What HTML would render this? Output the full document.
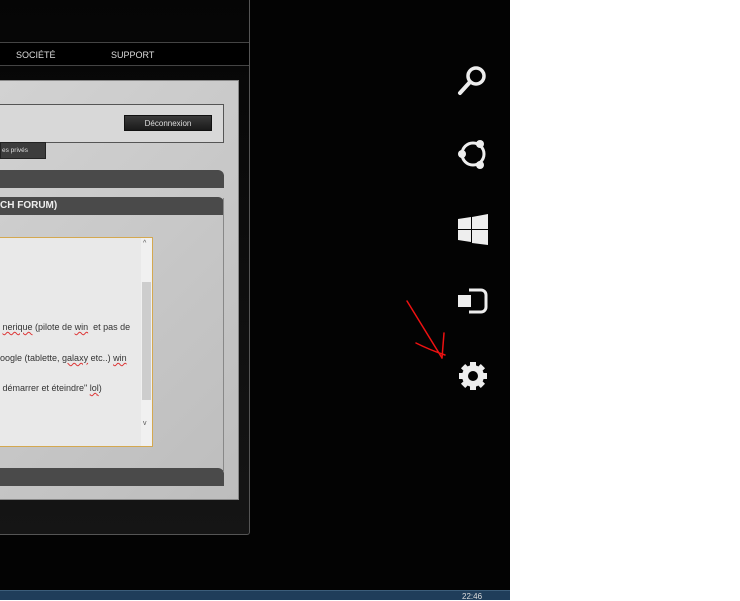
<!DOCTYPE html>
<html><head><meta charset="utf-8"><style>
*{margin:0;padding:0;box-sizing:border-box}
body{width:740px;height:600px;background:#fff;position:relative;overflow:hidden;font-family:"Liberation Sans",sans-serif}
#scr{position:absolute;left:0;top:0;width:510px;height:590px;background:#030303}
#win{position:absolute;left:0;top:0;width:250px;height:535px;background:linear-gradient(#050505,#111 70%,#151515);border-right:1px solid #555;border-bottom:1px solid #555;border-bottom-right-radius:3px}
#nav{position:absolute;left:0;top:42px;width:249px;height:24px;background:#000;border-top:1px solid #444;border-bottom:1px solid #444;color:#ddd;font-size:9px}
#nav span{position:absolute;top:7px}
#panel{position:absolute;left:0;top:80px;width:239px;height:420px;background:linear-gradient(135deg,#d2d2d2,#bdbdbd);border:1px solid #888;border-left:none}
.box{position:absolute;left:0;top:23px;width:224px;height:39px;background:#d8d8d8;border:1px solid #555;border-left:none}
.btn{position:absolute;left:124px;top:34px;width:88px;height:16px;background:linear-gradient(#3a3a3a,#1a1a1a);border:1px solid #111;color:#ddd;font-size:8px;text-align:center;line-height:15px}
.tab{position:absolute;left:0;top:61px;width:46px;height:17px;background:#3c3c3c;border:1px solid #222;color:#ddd;font-size:6.5px;line-height:15px;padding-left:1px}
.bar{position:absolute;left:0;width:224px;height:18px;background:#4a4a4a;border-top-right-radius:6px}
.frame{position:absolute;left:0;top:117px;width:224px;height:273px;border:1px solid #888;border-left:none;border-top:none}
#ta{position:absolute;left:0;top:156px;width:153px;height:210px;background:#e9e9e9;border:1px solid #d4a850;border-left:none;font-size:9px;color:#333}
#ta p{position:absolute;left:0;white-space:nowrap}
#sb{position:absolute;right:0;top:0;width:11px;height:208px;background:#f0f0f0}
#sb div{position:absolute;left:1px;top:44px;width:9px;height:118px;background:#cdcdcd}
u{text-decoration:underline wavy #d33;text-decoration-thickness:1px}
#task{position:absolute;left:0;top:590px;width:510px;height:10px;background:#1f3d5a;border-top:1px solid #3b5d7a}
#task span{position:absolute;left:462px;top:1px;font-size:8px;color:#ddd}
svg.i{position:absolute}
</style></head><body>
<div id="scr">
<div id="win">
<div id="nav"><span style="left:16px">SOCIÉTÉ</span><span style="left:111px">SUPPORT</span></div>
<div id="panel">
<div class="box"></div>
<div class="btn">Déconnexion</div>
<div class="tab">es privés</div>
<div class="bar" style="top:89px"></div>
<div class="bar" style="top:116px;color:#eee;font-size:10px;font-weight:bold;line-height:18px">CH FORUM)</div>
<div class="frame"></div>
<div id="ta">
<p style="top:84px">&nbsp;<u>nerique</u> (pilote de <u>win</u>&nbsp; et pas de</p>
<p style="top:115px">oogle (tablette, <u>galaxy</u> etc..) <u>win</u></p>
<p style="top:145px">&nbsp;démarrer et éteindre" <u>lol</u>)</p>
<div id="sb"><div></div><span style="position:absolute;left:2px;top:2px;font-size:7px;color:#555">^</span><span style="position:absolute;left:2px;top:182px;font-size:7px;color:#555">v</span></div>
</div>
<div class="bar" style="top:387px"></div>
</div>
</div>
<svg class="i" style="left:455px;top:62px" width="36" height="36" viewBox="0 0 36 36" fill="none" stroke="#eee" stroke-width="3.5"><circle cx="21" cy="14" r="8"/><line x1="15" y1="20" x2="5" y2="31" stroke-linecap="round" stroke-width="4"/></svg>
<svg class="i" style="left:455px;top:136px" width="36" height="36" viewBox="0 0 36 36" fill="none" stroke="#eee" stroke-width="3"><circle cx="18" cy="18" r="11"/><circle cx="25" cy="8" r="4" fill="#eee" stroke="none"/><circle cx="7" cy="18" r="4" fill="#eee" stroke="none"/><circle cx="25" cy="29" r="4" fill="#eee" stroke="none"/></svg>
<svg class="i" style="left:455px;top:212px" width="36" height="36" viewBox="0 0 36 36" fill="#eee"><path d="M3 7 L16 5 V17 H3Z M17 5 L33 2 V17 H17Z M3 18 H16 V30 L3 28Z M17 18 H33 V33 L17 31Z"/></svg>
<svg class="i" style="left:455px;top:286px" width="36" height="30" viewBox="0 0 36 30" fill="none" stroke="#eee" stroke-width="3"><path d="M14 4 H26 A5 5 0 0 1 31 9 V21 A5 5 0 0 1 26 26 H14"/><rect x="3" y="9" width="13" height="12" fill="#eee" stroke="none"/></svg>
<svg class="i" style="left:455px;top:358px" width="36" height="36" viewBox="0 0 36 36"><g fill="#eee"><circle cx="18" cy="18" r="11"/><g id="t"><rect x="15" y="4" width="6" height="6"/><rect x="15" y="26" width="6" height="6"/></g><use href="#t" transform="rotate(45 18 18)"/><use href="#t" transform="rotate(90 18 18)"/><use href="#t" transform="rotate(135 18 18)"/></g><circle cx="18" cy="18" r="5" fill="#030303"/></svg>
<svg class="i" style="left:400px;top:295px" width="60" height="70" fill="none" stroke="#e11" stroke-width="1.5" stroke-linecap="round"><path d="M7 6 L42 63"/><path d="M16 48 Q30 55 45 60"/><path d="M44 38 L42 63"/></svg>
</div>
<div id="task"><span>22:46</span></div>
</body></html>
